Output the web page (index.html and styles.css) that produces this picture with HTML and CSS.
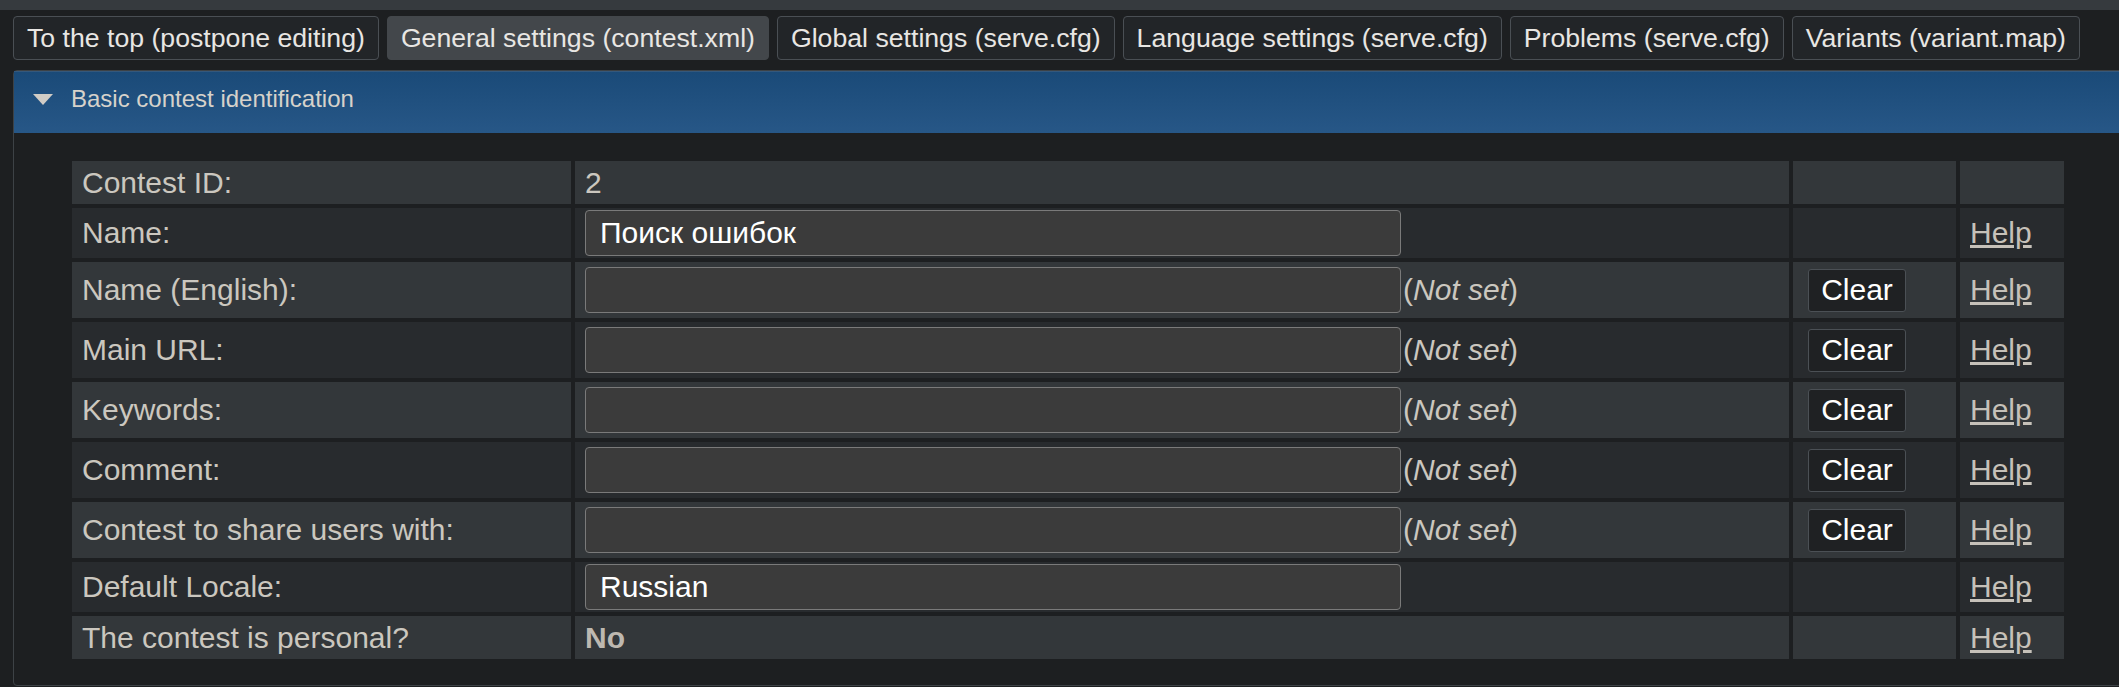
FILE: index.html
```html
<!DOCTYPE html>
<html lang="en">
<head>
<meta charset="utf-8">
<title>Contest settings</title>
<link rel="stylesheet" href="styles.css">
</head>
<body>
<div class="topstrip"></div>
<nav class="tabs">
  <button class="tab">To the top (postpone editing)</button>
  <button class="tab active">General settings (contest.xml)</button>
  <button class="tab">Global settings (serve.cfg)</button>
  <button class="tab">Language settings (serve.cfg)</button>
  <button class="tab">Problems (serve.cfg)</button>
  <button class="tab">Variants (variant.map)</button>
</nav>
<section class="panel">
  <div class="panel-head">
    <span class="caret"></span>
    <span class="panel-title">Basic contest identification</span>
  </div>
  <div class="panel-body">
    <table class="params">
      <colgroup>
        <col class="c-label"><col class="c-value"><col class="c-clear"><col class="c-help">
      </colgroup>
      <tr class="odd h43">
        <td class="label">Contest ID:</td>
        <td class="value">2</td>
        <td></td>
        <td></td>
      </tr>
      <tr class="even h50">
        <td class="label">Name:</td>
        <td class="value"><input class="field" type="text" value="Поиск ошибок"></td>
        <td></td>
        <td class="help"><a href="#">Help</a></td>
      </tr>
      <tr class="odd h56">
        <td class="label">Name (English):</td>
        <td class="value"><input class="field" type="text" value=""><span class="notset">(<i>Not set</i>)</span></td>
        <td class="clear"><button class="clear-btn">Clear</button></td>
        <td class="help"><a href="#">Help</a></td>
      </tr>
      <tr class="even h56">
        <td class="label">Main URL:</td>
        <td class="value"><input class="field" type="text" value=""><span class="notset">(<i>Not set</i>)</span></td>
        <td class="clear"><button class="clear-btn">Clear</button></td>
        <td class="help"><a href="#">Help</a></td>
      </tr>
      <tr class="odd h56">
        <td class="label">Keywords:</td>
        <td class="value"><input class="field" type="text" value=""><span class="notset">(<i>Not set</i>)</span></td>
        <td class="clear"><button class="clear-btn">Clear</button></td>
        <td class="help"><a href="#">Help</a></td>
      </tr>
      <tr class="even h56">
        <td class="label">Comment:</td>
        <td class="value"><input class="field" type="text" value=""><span class="notset">(<i>Not set</i>)</span></td>
        <td class="clear"><button class="clear-btn">Clear</button></td>
        <td class="help"><a href="#">Help</a></td>
      </tr>
      <tr class="odd h56">
        <td class="label">Contest to share users with:</td>
        <td class="value"><input class="field" type="text" value=""><span class="notset">(<i>Not set</i>)</span></td>
        <td class="clear"><button class="clear-btn">Clear</button></td>
        <td class="help"><a href="#">Help</a></td>
      </tr>
      <tr class="even h50">
        <td class="label">Default Locale:</td>
        <td class="value"><input class="field" type="text" value="Russian"></td>
        <td></td>
        <td class="help"><a href="#">Help</a></td>
      </tr>
      <tr class="odd h43">
        <td class="label">The contest is personal?</td>
        <td class="value"><b class="bold">No</b></td>
        <td></td>
        <td class="help"><a href="#">Help</a></td>
      </tr>
    </table>
  </div>
</section>
</body>
</html>
```

FILE: styles.css
```css
html, body {
  margin: 0;
  padding: 0;
  overflow: hidden;
}
body {
  background: #1d1f21;
  font-family: "Liberation Sans", Arial, sans-serif;
  font-size: 30px;
  color: #cbc7bf;
  height: 687px;
}
.topstrip {
  height: 10px;
  background: #363a3e;
}
.tabs {
  display: flex;
  gap: 8px;
  margin: 6px 0 0 13px;
}
.tab {
  height: 44px;
  padding: 0 13px;
  font-family: "Liberation Sans", Arial, sans-serif;
  font-size: 26.67px;
  color: #e8e6e3;
  background: #222528;
  border: 1px solid #4a4f54;
  border-radius: 4px;
  white-space: nowrap;
}
.tab.active {
  background: #43474b;
  border-color: #43474b;
}
.panel {
  margin: 10px 0 0 13px;
  width: 2160px;
  border: 1px solid #3d4246;
  border-radius: 4px;
}
.panel-head {
  height: 62px;
  display: flex;
  align-items: center;
  gap: 18px;
  padding: 0 0 7px 19px;
  background: linear-gradient(#1a4a78, #275787);
  border-top: 1px solid #34587c;
  box-sizing: border-box;
  color: #d6d2cb;
  font-size: 24px;
}
.caret {
  width: 0;
  height: 0;
  border-left: 10px solid transparent;
  border-right: 10px solid transparent;
  border-top: 11px solid #d0ccc6;
}
.panel-body {
  padding: 24px 0 22px 54px;
}
.params {
  border-collapse: separate;
  border-spacing: 4px;
  table-layout: fixed;
  width: 2000px;
}
.c-label { width: 499px; }
.c-value { width: 1214px; }
.c-clear { width: 163px; }
.c-help { width: 104px; }
.params td {
  padding: 0 0 0 10px;
  vertical-align: middle;
  white-space: nowrap;
}
.odd td { background: #33373a; }
.even td { background: #282b2e; }
.h43 td { height: 43px; }
.h50 td { height: 50px; }
.h56 td { height: 56px; }
.params td.clear { padding-left: 15px; }
.field {
  width: 816px;
  height: 46px;
  box-sizing: border-box;
  vertical-align: middle;
  margin: 0;
  padding: 0 14px;
  background: #3b3b3b;
  border: 1px solid #7a7a7a;
  border-radius: 4px;
  color: #ffffff;
  font-family: "Liberation Sans", Arial, sans-serif;
  font-size: 30px;
}
.notset {
  vertical-align: middle;
  margin-left: 2px;
  color: #cbc7bf;
}
.clear-btn {
  width: 98px;
  height: 43px;
  vertical-align: middle;
  padding: 0;
  background: #1f2123;
  border: 1px solid #4b5055;
  border-radius: 3px;
  color: #ffffff;
  font-family: "Liberation Sans", Arial, sans-serif;
  font-size: 30px;
}
.help a {
  color: #c6c1b9;
  text-decoration: underline;
}
.bold {
  color: #bdb8b0;
}
```
